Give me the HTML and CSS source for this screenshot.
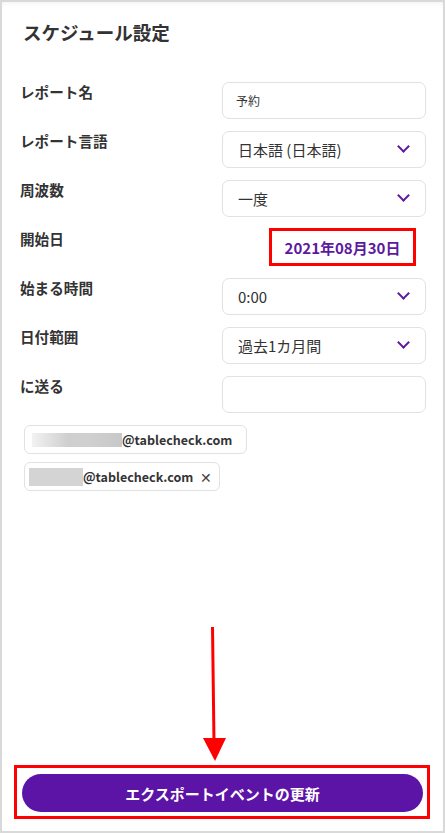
FILE: index.html
```html
<!DOCTYPE html>
<html lang="ja">
<head>
    <meta charset="UTF-8">
    <meta name="viewport" content="width=device-width, initial-scale=1.0">
    <title>スケジュール設定</title>

    <link rel="stylesheet" href="styles.css">
</head>
<body>
    <section class="frame">
        <h1 class="title">スケジュール設定</h1>

        <div class="form">
            <div class="label">レポート名</div>
            <div class="field small">予約</div>

            <div class="label">レポート言語</div>
            <div class="field select">日本語 (日本語)<span class="chev"></span></div>

            <div class="label">周波数</div>
            <div class="field select">一度<span class="chev"></span></div>

            <div class="label">開始日</div>
            <div class="date-cell"><div class="date">2021年08月30日</div></div>

            <div class="label">始まる時間</div>
            <div class="field select">0:00<span class="chev"></span></div>

            <div class="label">日付範囲</div>
            <div class="field select">過去1カ月間<span class="chev"></span></div>

            <div class="label">に送る</div>
            <div class="field"></div>
        </div>

        <div class="chips">
            <div class="chip"><span class="blur wide"></span>@tablecheck.com</div>
            <div class="chip"><span class="blur short"></span>@tablecheck.com<span class="close">✕</span></div>
        </div>

        <svg class="arrow" width="30" height="134" viewBox="200 627 30 134">
            <line x1="212.5" y1="627" x2="214" y2="742" stroke="#ff0000" stroke-width="3"/>
            <polygon points="203,738 226,738 215,761" fill="#ff0000"/>
        </svg>

        <div class="button-box">
            <button class="update">エクスポートイベントの更新</button>
        </div>
    </section>
</body>
</html>
```

FILE: styles.css
```css
* {
    box-sizing: border-box;
}

body {
    margin: 0;
    font-family: "Noto Sans CJK JP", "Noto Sans", sans-serif;
    color: #333333;
    background-color: #ffffff;
}

.frame {
    height: 833px;
    border: 2px solid #d9d9d9;
    display: flex;
    flex-direction: column;
    box-shadow: 0 4px 6px -4px rgba(0, 0, 0, 0.08) inset;
}

.title {
    margin: 0;
    padding: 18px 21px 0;
    font-size: 18.5px;
    line-height: 24px;
    font-weight: bold;
    color: #333333;
}

.form {
    margin-top: 38px;
    padding: 0 17px 0 18px;
    display: grid;
    grid-template-columns: 1fr 204px;
    grid-auto-rows: 37px;
    row-gap: 12px;
}

.label {
    font-size: 14.6px;
    font-weight: bold;
    line-height: 20px;
    color: #333333;
}

.field {
    display: flex;
    align-items: center;
    padding: 0 15px;
    border: 1px solid #e2e2e2;
    border-radius: 7px;
    font-size: 15px;
    color: #333333;
}

.field.small {
    padding-left: 13px;
    font-size: 12px;
}

.chev {
    margin-left: auto;
    width: 9px;
    height: 9px;
    border-right: 2.6px solid #5b1aa0;
    border-bottom: 2.6px solid #5b1aa0;
    transform: translateY(-3px) rotate(45deg);
    margin-right: 2px;
}

.date-cell {
    padding-left: 47px;
}

.date {
    width: 147px;
    height: 38px;
    margin-top: -1px;
    border: 3px solid #ff0000;
    display: flex;
    align-items: center;
    justify-content: center;
    font-size: 15px;
    font-weight: bold;
    color: #5b1aa0;
}

.chips {
    margin: 12px 0 0 22px;
    display: flex;
    flex-direction: column;
    align-items: flex-start;
    gap: 8px;
}

.chip {
    height: 29px;
    display: flex;
    align-items: center;
    padding: 0 14px 0 4px;
    border: 1px solid #e2e2e2;
    border-radius: 6px;
    font-size: 12.5px;
    font-weight: bold;
    color: #333333;
}

.blur {
    display: inline-block;
    height: 14px;
    background: #d2d2d2;
}

.blur.wide {
    width: 90px;
    margin-left: 3px;
    background: linear-gradient(to right, #f2f2f2, #cfcfcf 40%, #d0d0d0 60%, #c8c8c8);
}

.blur.short {
    width: 54px;
    height: 18px;
    background: #d4d4d4;
}

.close {
    margin-left: 7px;
    margin-right: -7px;
    font-size: 14px;
    font-weight: normal;
    color: #444444;
}

.arrow {
    display: block;
    margin: auto 0 0 198px;
}

.button-box {
    margin: 4px 13px 12px 12px;
    height: 54px;
    border: 3px solid #ff0000;
    padding: 6px 4px 4px 5px;
}

.update {
    display: block;
    width: 100%;
    height: 38px;
    border: none;
    border-radius: 19px;
    background-color: #5c14a6;
    color: #ffffff;
    font-family: "Noto Sans CJK JP", "Noto Sans", sans-serif;
    font-size: 15px;
    font-weight: bold;
}
```
